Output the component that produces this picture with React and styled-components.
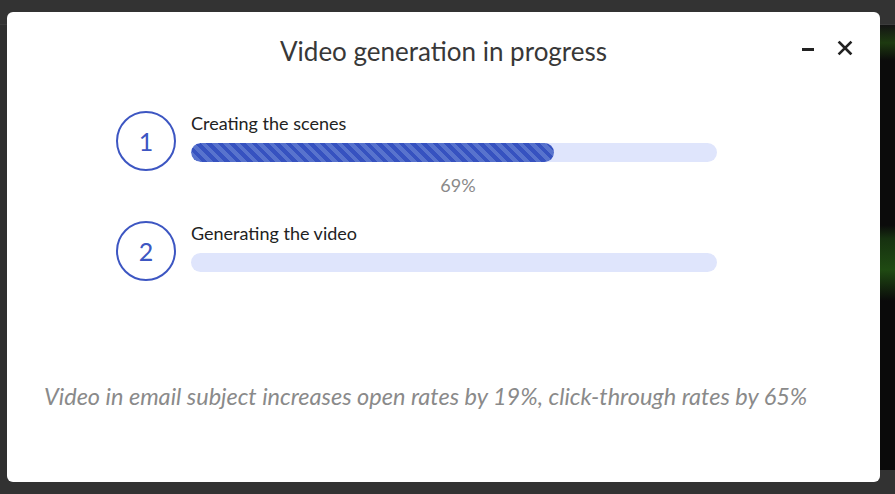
import React from 'react'
import styled, { createGlobalStyle } from 'styled-components'

const GlobalStyle = createGlobalStyle`
  html, body {
    margin: 0;
    padding: 0;
    background: #323232;
    font-family: Lato, 'Open Sans', sans-serif;
  }
`

const steps = [
  { n: 1, label: 'Creating the scenes', progress: 69 },
  { n: 2, label: 'Generating the video', progress: 0 },
]

const App = () => {
  return (
    <>
      <GlobalStyle />
      <Backdrop>
        <TopBar />
        <Underlay>
          <PageArea />
          <VideoStrip />
        </Underlay>
        <BottomBar />
        <Modal>
          <Header>
            <Title>Video generation in progress</Title>
            <Controls>
              <IconButton aria-label='minimize'>
                <svg width='14' height='14' viewBox='0 0 14 14'>
                  <rect x='1' y='7' width='12' height='3' fill='#222' />
                </svg>
              </IconButton>
              <IconButton aria-label='close'>
                <svg width='16' height='16' viewBox='0 0 16 16'>
                  <path
                    d='M2.5 2.5 L13.5 13.5 M13.5 2.5 L2.5 13.5'
                    stroke='#222'
                    strokeWidth='2.6'
                    strokeLinecap='square'
                  />
                </svg>
              </IconButton>
            </Controls>
          </Header>

          <Steps>
            {steps.map((step) => (
              <Step key={step.n}>
                <Circle>{step.n}</Circle>
                <StepBody>
                  <StepLabel>{step.label}</StepLabel>
                  <Track>
                    {step.progress > 0 && (
                      <Fill style={{ width: `${step.progress}%` }} />
                    )}
                  </Track>
                  {step.progress > 0 && (
                    <Percent>{step.progress}%</Percent>
                  )}
                </StepBody>
              </Step>
            ))}
          </Steps>

          <Fact>
            Video in email subject increases open rates by 19%, click-through
            rates by 65%
          </Fact>
        </Modal>
      </Backdrop>
    </>
  )
}

const Backdrop = styled.div`
  position: relative;
  display: grid;
  grid-template-rows: 25px 1fr 24px;
  width: 895px;
  height: 494px;
  overflow: hidden;
  background: #323232;
`

const TopBar = styled.div`
  background: #333333;
  border-bottom: 1px solid #3c3c3c;
`

const Underlay = styled.div`
  display: grid;
  grid-template-columns: 1fr 15px;
`

const PageArea = styled.div`
  background: #2f2f2f;
`

const VideoStrip = styled.div`
  background: linear-gradient(
    180deg,
    #141414 0%,
    #1d3a10 4%,
    #0b0b0b 8%,
    #0b0b0b 45%,
    #163110 48%,
    #1f4a12 55%,
    #0a0a0a 62%,
    #0a0a0a 100%
  );
`

const BottomBar = styled.div`
  background: #323232;
`

const Modal = styled.div`
  position: absolute;
  top: 12px;
  left: 7px;
  width: 873px;
  height: 470px;
  box-sizing: border-box;
  display: flex;
  flex-direction: column;
  background: #ffffff;
  border-radius: 6px;
`

const Header = styled.div`
  position: relative;
  display: flex;
  justify-content: center;
  align-items: center;
  height: 80px;
`

const Title = styled.h2`
  margin: 0 0 2px;
  font-family: Lato, sans-serif;
  font-weight: 400;
  font-size: 26px;
  color: #383838;
`

const Controls = styled.div`
  position: absolute;
  top: 28px;
  right: 27px;
  display: flex;
  align-items: center;
  gap: 22px;
`

const IconButton = styled.button`
  display: flex;
  align-items: center;
  justify-content: center;
  padding: 0;
  border: none;
  background: none;
  cursor: pointer;
`

const Steps = styled.div`
  display: flex;
  flex-direction: column;
  gap: 26px;
  width: 601px;
  margin: 19px 0 0 109px;
`

const Step = styled.div`
  display: flex;
  align-items: flex-start;
  gap: 15px;
`

const Circle = styled.div`
  flex: none;
  display: flex;
  align-items: center;
  justify-content: center;
  width: 60px;
  height: 60px;
  box-sizing: border-box;
  border: 2px solid #3d56c2;
  border-radius: 50%;
  color: #3d56c2;
  font-size: 25px;
  font-weight: 400;
`

const StepBody = styled.div`
  flex: 1;
  display: flex;
  flex-direction: column;
`

const StepLabel = styled.div`
  font-size: 18px;
  font-weight: 400;
  line-height: 24px;
  color: #222222;
`

const Track = styled.div`
  height: 19px;
  margin-top: 8px;
  border-radius: 10px;
  background: #dfe5fc;
  overflow: hidden;
`

const Fill = styled.div`
  height: 100%;
  border-radius: 10px;
  background: repeating-linear-gradient(
    45deg,
    #3652c0 0px,
    #3652c0 4px,
    #5873cd 4px,
    #5873cd 8px
  );
`

const Percent = styled.div`
  margin-top: 13px;
  padding-left: 8px;
  font-size: 18px;
  font-weight: 400;
  line-height: 20px;
  color: #8a8a8a;
  text-align: center;
`

const Fact = styled.p`
  margin: auto 0 71px;
  padding-left: 37px;
  font-style: italic;
  font-weight: 400;
  font-size: 23.5px;
  line-height: 29px;
  color: #8a8a8a;
`

export default App
